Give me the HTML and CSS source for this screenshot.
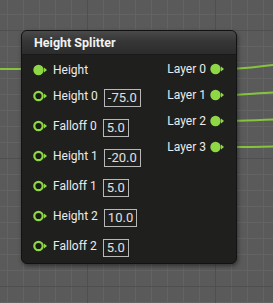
FILE: index.html
```html
<!DOCTYPE html>
<html lang="en">
<head>
  <meta charset="UTF-8">
  <title>Height Splitter</title>
  <link rel="stylesheet" href="styles.css">
</head>
<body>

  <div class="canvas">
    <!-- wires -->
    <svg class="wires" width="273" height="303" viewBox="0 0 273 303">
      <path d="M0 69 L34 69" />
      <path d="M224 69 C245 69, 255 67, 273 65" />
      <path d="M224 95 C245 95, 255 93, 273 92.5" />
      <path d="M224 121 C245 121, 255 120, 273 119.5" />
      <path d="M224 147 C245 147, 255 147, 273 146.5" />
    </svg>

    <!-- node -->
    <div class="node">
      <div class="node-header">Height Splitter</div>
      <div class="node-body">
        <div class="inputs">
          <div class="pin-row first">
            <svg class="pin" width="14" height="12" viewBox="0 0 14 12"><circle cx="5.5" cy="6" r="5.2" class="full"/><polygon points="11,3.5 14,6 11,8.5"/></svg>
            <span class="label">Height</span>
          </div>
          <div class="pin-row">
            <svg class="pin" width="14" height="12" viewBox="0 0 14 12"><circle cx="5.5" cy="6" r="4.2" class="ring"/><polygon points="11,3.5 14,6 11,8.5"/></svg>
            <span class="label">Height 0</span>
            <span class="value">-75.0</span>
          </div>
          <div class="pin-row">
            <svg class="pin" width="14" height="12" viewBox="0 0 14 12"><circle cx="5.5" cy="6" r="4.2" class="ring"/><polygon points="11,3.5 14,6 11,8.5"/></svg>
            <span class="label">Falloff 0</span>
            <span class="value">5.0</span>
          </div>
          <div class="pin-row">
            <svg class="pin" width="14" height="12" viewBox="0 0 14 12"><circle cx="5.5" cy="6" r="4.2" class="ring"/><polygon points="11,3.5 14,6 11,8.5"/></svg>
            <span class="label">Height 1</span>
            <span class="value">-20.0</span>
          </div>
          <div class="pin-row">
            <svg class="pin" width="14" height="12" viewBox="0 0 14 12"><circle cx="5.5" cy="6" r="4.2" class="ring"/><polygon points="11,3.5 14,6 11,8.5"/></svg>
            <span class="label">Falloff 1</span>
            <span class="value">5.0</span>
          </div>
          <div class="pin-row">
            <svg class="pin" width="14" height="12" viewBox="0 0 14 12"><circle cx="5.5" cy="6" r="4.2" class="ring"/><polygon points="11,3.5 14,6 11,8.5"/></svg>
            <span class="label">Height 2</span>
            <span class="value">10.0</span>
          </div>
          <div class="pin-row">
            <svg class="pin" width="14" height="12" viewBox="0 0 14 12"><circle cx="5.5" cy="6" r="4.2" class="ring"/><polygon points="11,3.5 14,6 11,8.5"/></svg>
            <span class="label">Falloff 2</span>
            <span class="value">5.0</span>
          </div>
        </div>

        <div class="outputs">
          <div class="out-row">
            <span class="label">Layer 0</span>
            <svg class="pin" width="14" height="12" viewBox="0 0 14 12"><circle cx="5.5" cy="6" r="5.2" class="full"/><polygon points="11,3.5 14,6 11,8.5"/></svg>
          </div>
          <div class="out-row">
            <span class="label">Layer 1</span>
            <svg class="pin" width="14" height="12" viewBox="0 0 14 12"><circle cx="5.5" cy="6" r="5.2" class="full"/><polygon points="11,3.5 14,6 11,8.5"/></svg>
          </div>
          <div class="out-row">
            <span class="label">Layer 2</span>
            <svg class="pin" width="14" height="12" viewBox="0 0 14 12"><circle cx="5.5" cy="6" r="5.2" class="full"/><polygon points="11,3.5 14,6 11,8.5"/></svg>
          </div>
          <div class="out-row">
            <span class="label">Layer 3</span>
            <svg class="pin" width="14" height="12" viewBox="0 0 14 12"><circle cx="5.5" cy="6" r="5.2" class="full"/><polygon points="11,3.5 14,6 11,8.5"/></svg>
          </div>
        </div>
      </div>
    </div>
  </div>

</body>
</html>
```

FILE: styles.css
```css
* {
  box-sizing: border-box;
}

body {
  margin: 0;
  padding: 0;
  font-family: 'Roboto', 'Liberation Sans', sans-serif;
  background-color: #5a5a5a;
}

/* 그리드 캔버스 */
.canvas {
  position: relative;
  width: 273px;
  height: 303px;
  overflow: hidden;
  background-color: #5a5a5a;
  background-image:
    linear-gradient(to right, #4f4f4f 1px, transparent 1px),
    linear-gradient(to bottom, #4f4f4f 1px, transparent 1px),
    linear-gradient(to right, #636363 1px, transparent 1px),
    linear-gradient(to bottom, #636363 1px, transparent 1px);
  background-size: 128px 128px, 128px 128px, 16px 16px, 16px 16px;
  background-position: 87px 30px, 87px 30px, 7px 14px, 7px 14px;
}

.wires {
  position: absolute;
  left: 0;
  top: 0;
}

.wires path {
  fill: none;
  stroke: #86c43e;
  stroke-width: 2;
}

/* 노드 */
.node {
  position: absolute;
  left: 21px;
  top: 30px;
  width: 216px;
  height: 234px;
  background-color: #1f201e;
  border: 1px solid #121212;
  border-radius: 6px;
  box-shadow: 1px 2px 4px rgba(0, 0, 0, 0.45);
  overflow: hidden;
  color: #ebebeb;
}

.node-header {
  height: 24px;
  padding: 4px 0 0 12px;
  font-size: 12.5px;
  font-weight: bold;
  color: #f2f2f2;
  background: linear-gradient(to bottom, #4a4a4a 0%, #363636 45%, #2c2c2c 100%);
  border-bottom: 1px solid #1a1a1a;
}

.node-body {
  display: flex;
  justify-content: space-between;
}

.inputs {
  display: flex;
  flex-direction: column;
  padding: 4px 0 0 11px;
}

.pin-row {
  display: flex;
  align-items: center;
  height: 30px;
}

.pin-row.first {
  height: 22px;
}

.pin-row .label {
  margin-left: 6px;
  font-size: 12px;
}

.value {
  margin-left: 6px;
  margin-top: 3px;
  padding: 0 3px;
  height: 18px;
  line-height: 16px;
  border: 1px solid #b8b8b8;
  font-size: 13px;
  color: #e0e0e0;
}

.outputs {
  display: flex;
  flex-direction: column;
  padding: 1px 12px 0 0;
}

.out-row {
  display: flex;
  align-items: center;
  justify-content: flex-end;
  height: 26px;
}

.out-row .label {
  margin-right: 4px;
  font-size: 12px;
}

.pin circle.full {
  fill: #8ed845;
}

.pin circle.ring {
  fill: #1a1c16;
  stroke: #8ed845;
  stroke-width: 2.2;
}

.pin polygon {
  fill: #8ed845;
}
```
